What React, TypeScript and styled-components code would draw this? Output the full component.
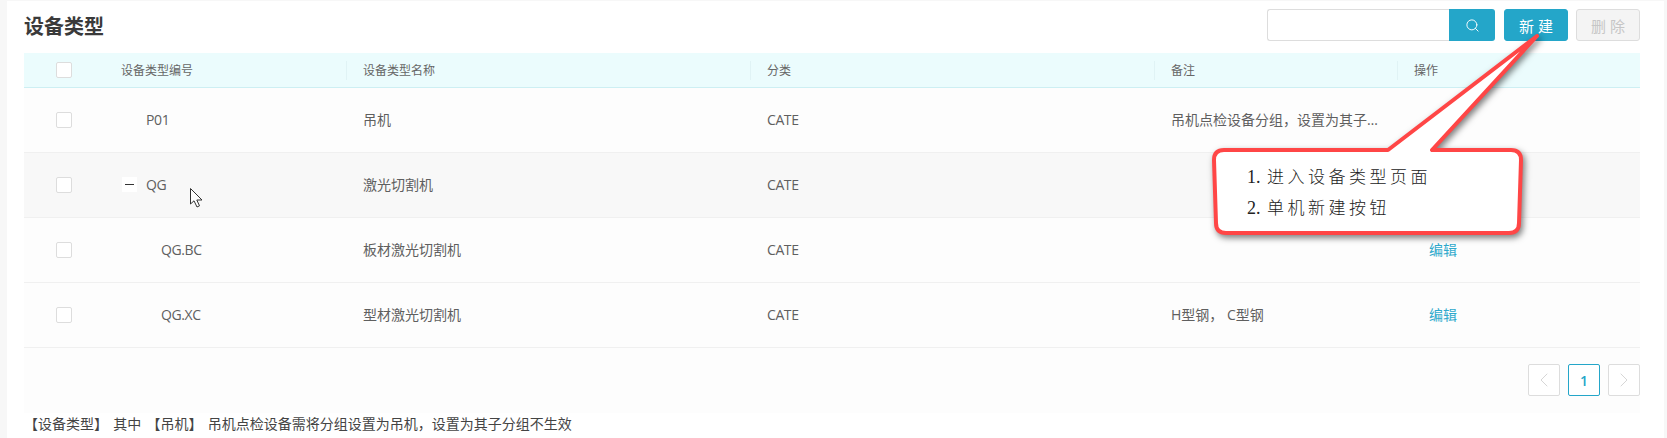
import React from "react";
import styled, { createGlobalStyle } from "styled-components";
import { Search, ChevronLeft, ChevronRight } from "lucide-react";

const Global = createGlobalStyle`
  html, body { margin: 0; padding: 0; background: #f7f7f7; }
  body { font-family: "Open Sans", "Noto Sans CJK SC", sans-serif; color: #555; }
  * { box-sizing: border-box; }
`;

const Page = styled.div`
  position: relative;
  width: 1667px;
  height: 438px;
  overflow: hidden;
  padding: 1px 3px 0 7px;
`;

const Card = styled.div`
  background: #fff;
  height: 437px;
  padding: 8px 24px 0 17px;
`;

const TopBar = styled.div`
  display: flex;
  align-items: center;
  height: 32px;
  margin-bottom: 12px;
`;

const Title = styled.h1`
  flex: 1;
  margin: 0;
  font-size: 20px;
  font-weight: 700;
  color: #3a3a3a;
  font-family: "Noto Sans CJK SC", sans-serif;
`;

const SearchBox = styled.div`
  display: flex;
  width: 228px;
  height: 32px;
  margin-right: 9px;
`;

const SearchInput = styled.input`
  flex: 1;
  min-width: 0;
  border: 1px solid #ddd;
  border-right: 0;
  border-radius: 3px 0 0 3px;
  background: #fff;
  outline: none;
`;

const SearchButton = styled.button`
  width: 46px;
  border: 0;
  padding: 0;
  display: flex;
  align-items: center;
  justify-content: center;
  background: #24a6c9;
  color: #fff;
  border-radius: 0 3px 3px 0;
`;

const ActionButton = styled.button<{ $disabled?: boolean }>`
  width: 64px;
  height: 32px;
  padding: 0;
  margin-left: ${(p) => (p.$disabled ? "8px" : "0")};
  border: 1px solid ${(p) => (p.$disabled ? "#ddd" : "#24a6c9")};
  border-radius: 3px;
  background: ${(p) => (p.$disabled ? "#f4f4f4" : "#24a6c9")};
  color: ${(p) => (p.$disabled ? "#c6c6c6" : "#fff")};
  font-family: "Open Sans", "Noto Sans CJK SC", sans-serif;
  font-size: 15px;
`;

const TableArea = styled.div`
  background: #fdfdfd;
  height: 360px;
`;

const columns = "80px 242px 404px 404px 243px 243px";

const HeadRow = styled.div`
  display: grid;
  grid-template-columns: ${columns};
  height: 35px;
  align-items: center;
  background: #ebfcfd;
  border-bottom: 1px solid #cdeff3;
  font-size: 12px;
  color: #666;
`;

const HeadCell = styled.div<{ $sep?: boolean }>`
  height: 19px;
  line-height: 19px;
  padding-left: ${(p) => (p.$sep ? "16px" : "17px")};
  border-left: ${(p) => (p.$sep ? "1px solid #e0f3f5" : "0")};
`;

const Row = styled.div<{ $hover?: boolean }>`
  display: grid;
  grid-template-columns: ${columns};
  height: 65px;
  align-items: center;
  border-bottom: 1px solid #f0f0f0;
  background: ${(p) => (p.$hover ? "#f8f8f8" : "#fdfdfd")};
  font-size: 14px;
  color: #5f5f5f;
`;

const CheckCell = styled.div`
  display: flex;
  justify-content: center;
`;

const CheckBox = styled.span`
  display: block;
  width: 16px;
  height: 16px;
  background: #fff;
  border: 1px solid #ddd;
  border-radius: 2px;
`;

const Cell = styled.div`
  padding: 0 16px 2px 17px;
  white-space: nowrap;
  overflow: hidden;
  text-overflow: ellipsis;
`;

const LatinCell = styled(Cell)`
  letter-spacing: -0.4px;
`;

const CodeCell = styled.div<{ $level: number }>`
  display: flex;
  align-items: center;
  padding: 0 0 2px ${(p) => 42 + p.$level * 15}px;
  position: relative;
  letter-spacing: -0.4px;
`;

const Expander = styled.span`
  position: absolute;
  left: 18px;
  top: 50%;
  margin-top: -8px;
  width: 15px;
  height: 15px;
  background: #fff;
  display: flex;
  align-items: center;
  justify-content: center;
  &::before {
    content: "";
    width: 9px;
    height: 1px;
    background: #333;
  }
`;

const ActionCell = styled.div`
  padding: 0 0 2px 32px;
`;

const EditLink = styled.a`
  color: #2fa9cc;
  font-size: 14px;
`;

const Pager = styled.div`
  display: flex;
  justify-content: flex-end;
  gap: 8px;
  padding-top: 16px;
`;

const PageButton = styled.div<{ $active?: boolean }>`
  width: 32px;
  height: 32px;
  display: flex;
  align-items: center;
  justify-content: center;
  border: 1px solid ${(p) => (p.$active ? "#24a6c9" : "#ddd")};
  border-radius: 2px;
  background: #fff;
  color: ${(p) => (p.$active ? "#24a6c9" : "#ccc")};
  font-size: 14px;
  font-weight: 600;
`;

const Note = styled.div`
  height: 22px;
  line-height: 22px;
  font-size: 14px;
  color: #444;
  white-space: pre;
  word-spacing: 1.6px;
`;

const Callout = styled.div`
  position: absolute;
  left: 1200px;
  top: 25px;
  width: 340px;
  height: 225px;
`;

const CalloutShape = styled.svg`
  display: block;
  filter: drop-shadow(2px 3px 3px rgba(0, 0, 0, 0.5));
`;

const CalloutText = styled.div`
  position: absolute;
  left: 47px;
  top: 137px;
  font-family: "Liberation Serif", "Noto Sans CJK SC", serif;
  font-size: 17px;
  font-weight: 300;
  line-height: 31px;
  letter-spacing: 3.5px;
  color: #222;
  white-space: nowrap;
`;

const Numeral = styled.span`
  display: inline-block;
  width: 20px;
  font-size: 18px;
  letter-spacing: 0;
`;

const Pointer = styled.svg`
  position: absolute;
  left: 189px;
  top: 187px;
`;

const rows = [
  { code: "P01", name: "吊机", remark: "吊机点检设备分组，设置为其子分组不生效", level: 0 },
  { code: "QG", name: "激光切割机", remark: "", level: 0, expanded: true, hover: true },
  { code: "QG.BC", name: "板材激光切割机", remark: "", level: 1, edit: true },
  { code: "QG.XC", name: "型材激光切割机", remark: "H型钢， C型钢", level: 1, edit: true },
];

export default function App() {
  return (
    <Page>
      <Global />
      <Card>
        <TopBar>
          <Title>设备类型</Title>
          <SearchBox>
            <SearchInput />
            <SearchButton>
              <Search size={15} strokeWidth={1.5} />
            </SearchButton>
          </SearchBox>
          <ActionButton>新 建</ActionButton>
          <ActionButton $disabled>删 除</ActionButton>
        </TopBar>
        <TableArea>
          <HeadRow>
            <CheckCell>
              <CheckBox />
            </CheckCell>
            <HeadCell>设备类型编号</HeadCell>
            <HeadCell $sep>设备类型名称</HeadCell>
            <HeadCell $sep>分类</HeadCell>
            <HeadCell $sep>备注</HeadCell>
            <HeadCell $sep>操作</HeadCell>
          </HeadRow>
          {rows.map((r) => (
            <Row key={r.code} $hover={r.hover}>
              <CheckCell>
                <CheckBox />
              </CheckCell>
              <CodeCell $level={r.level}>
                {r.expanded && <Expander />}
                {r.code}
              </CodeCell>
              <Cell>{r.name}</Cell>
              <LatinCell>CATE</LatinCell>
              <Cell>{r.remark}</Cell>
              <ActionCell>{r.edit && <EditLink>编辑</EditLink>}</ActionCell>
            </Row>
          ))}
          <Pager>
            <PageButton>
              <ChevronLeft size={24} strokeWidth={0.8} />
            </PageButton>
            <PageButton $active>1</PageButton>
            <PageButton>
              <ChevronRight size={24} strokeWidth={0.8} />
            </PageButton>
          </Pager>
        </TableArea>
        <Note>【设备类型】 其中 【吊机】 吊机点检设备需将分组设置为吊机，设置为其子分组不生效</Note>
      </Card>
      <Pointer width="16" height="22" viewBox="0 0 16 22">
        <path
          d="M1.5 1.5 V17 L5 13.8 L8 20 L10.5 18.8 L7.8 13 H13 Z"
          fill="#fff"
          stroke="#333"
          strokeWidth="1"
        />
      </Pointer>
      <Callout>
        <CalloutShape width="340" height="225" viewBox="1200 25 340 225">
          <path
            d="M1224 150 H1388 L1537 36 L1432 150 H1511 Q1521 150 1521 160 L1519 223 Q1519 233 1509 233 H1226 Q1216 233 1216 223 L1214 160 Q1214 150 1224 150 Z"
            fill="#fff"
            stroke="#ff4646"
            strokeWidth="4"
            strokeLinejoin="round"
          />
        </CalloutShape>
        <CalloutText>
          <div>
            <Numeral>1.</Numeral>进入设备类型页面
          </div>
          <div>
            <Numeral>2.</Numeral>单机新建按钮
          </div>
        </CalloutText>
      </Callout>
    </Page>
  );
}
